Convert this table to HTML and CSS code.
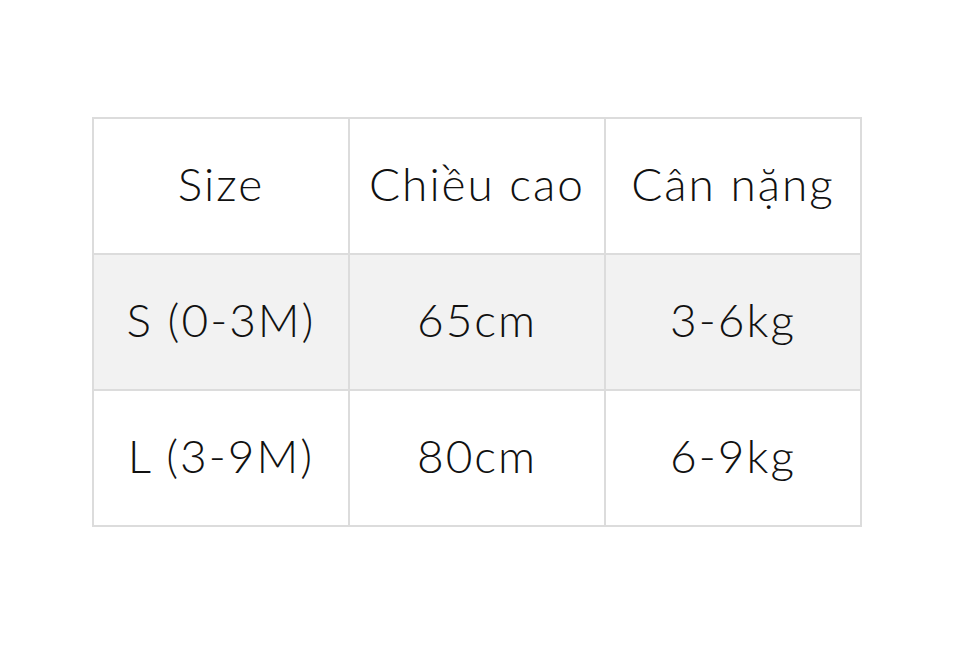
FILE: index.html
```html
<!DOCTYPE html>
<html lang="vi">
<head>
<meta charset="utf-8">
<title>Bảng size</title>
<link rel="stylesheet" href="styles.css">
</head>
<body>
<main class="page">
  <table class="size-table">
    <thead>
      <tr>
        <th>Size</th>
        <th>Chiều cao</th>
        <th>Cân nặng</th>
      </tr>
    </thead>
    <tbody>
      <tr class="alt">
        <td>S (0-3M)</td>
        <td>65cm</td>
        <td>3-6kg</td>
      </tr>
      <tr>
        <td>L (3-9M)</td>
        <td>80cm</td>
        <td>6-9kg</td>
      </tr>
    </tbody>
  </table>
</main>
</body>
</html>
```

FILE: styles.css
```css
html, body {
  margin: 0;
  padding: 0;
  background: #ffffff;
}

.page {
  height: 650px;
  display: flex;
  align-items: center;
  justify-content: center;
  padding-right: 6px;
  padding-bottom: 6px;
  box-sizing: border-box;
}

.size-table {
  border-collapse: collapse;
  table-layout: fixed;
  font-family: "Lato", "Open Sans", sans-serif;
  font-weight: 300;
  font-size: 46px;
  letter-spacing: 2px;
  color: #111111;
}

.size-table tr {
  height: 136px;
}

.size-table th,
.size-table td {
  width: 254px;
  padding: 0 0 6px 0;
  border: 2px solid #dcdcdc;
  text-align: center;
  vertical-align: middle;
  font-weight: 300;
  white-space: nowrap;
}

.size-table tr.alt td {
  background: #f2f2f2;
}
```
